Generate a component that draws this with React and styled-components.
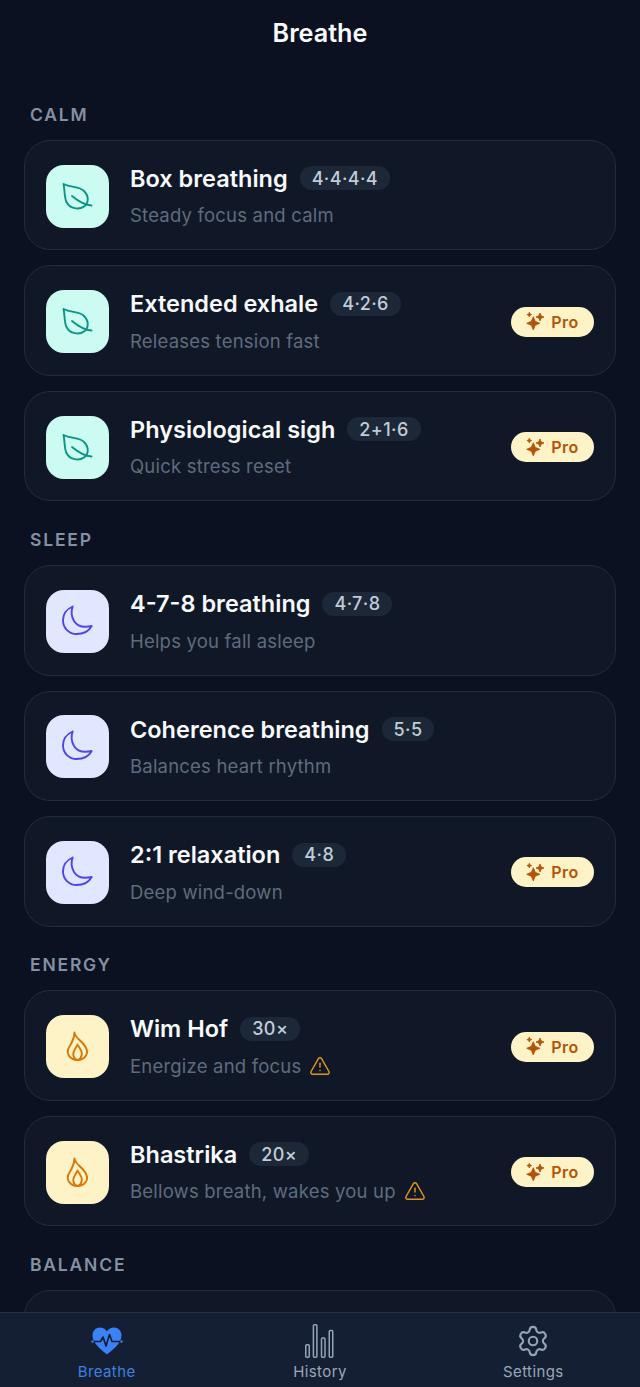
import React from "react";
import styled, { createGlobalStyle } from "styled-components";
import { TriangleAlert, Settings } from "lucide-react";

const Global = createGlobalStyle`
  html, body { margin: 0; padding: 0; background: #0b1120; }
  * { box-sizing: border-box; }
`;
const Page = styled.div`
  width: 640px; height: 1387px; display: flex; flex-direction: column; overflow: hidden;
  background: #0b1120; font-family: Inter, "Liberation Sans", sans-serif; color: #f8fafc;
`;
const Header = styled.h1`
  margin: 0; height: 66px; flex: none; display: flex; align-items: center; justify-content: center;
  font-size: 25.2px; font-weight: 600; color: #f8fafc;
`;
const Scroll = styled.main`
  flex: 1; min-height: 0; overflow: hidden; padding: 36.8px 24px 0;
`;
const Section = styled.section`
  margin-bottom: 26.5px;
  display: flex; flex-direction: column;
`;
const SectionLabel = styled.h2`
  margin: 0 0 13.2px 6px; height: 24px; line-height: 24px; font-size: 17.5px; font-weight: 600;
  letter-spacing: 1.8px; color: #8490a3; text-transform: uppercase;
`;
const Cards = styled.div`
  display: flex; flex-direction: column; gap: 15px;
`;
const Card = styled.div`
  height: 110.5px; flex: none; display: flex; align-items: center; gap: 21px; padding: 2px 21px 0;
  background: #101828; border: 1px solid #222c3c; border-radius: 26px;
`;
const Tile = styled.div`
  width: 63px; height: 63px; flex: none; border-radius: 18px; display: flex; align-items: center; justify-content: center;
  background: ${p => p.$bg}; color: ${p => p.$fg};
`;
const Body = styled.div`
  flex: 1; min-width: 0; display: flex; flex-direction: column; gap: 9.5px;
`;
const TitleRow = styled.div`
  display: flex; align-items: center; gap: 12px; height: 29px;
`;
const Title = styled.span`
  font-size: 23.5px; font-weight: 600; color: #f8fafc; white-space: nowrap;
`;
const Pattern = styled.span`
  height: 24px; padding: 0 12px; border-radius: 12px; background: #1c2838; color: #c2ccd9;
  display: flex; align-items: center; font-size: 18px; font-weight: 500; letter-spacing: 0.4px; white-space: nowrap;
`;
const SubRow = styled.div`
  display: flex; align-items: center; gap: 8px; height: 26px;
`;
const Sub = styled.span`
  font-size: 18.5px; color: #5f6b7d; letter-spacing: 0.2px; white-space: nowrap;
`;
const ProBadge = styled.div`
  height: 30px; width: 83px; flex: none; border-radius: 15px; background: #fef3c7; color: #b45309;
  display: flex; align-items: center; justify-content: center; gap: 6px;
  font-size: 16px; font-weight: 600; letter-spacing: 0.5px;
`;
const TabBar = styled.nav`
  height: 75px; flex: none; display: grid; grid-template-columns: repeat(3, 1fr);
  background: #141f33; border-top: 1px solid #263143;
`;
const Tab = styled.div`
  display: flex; flex-direction: column; align-items: center; padding-top: 11px; gap: 4px;
  color: ${p => (p.$active ? "#3b82f6" : "#94a3b8")};
`;
const TabIcon = styled.div`
  height: 34px; display: flex; align-items: center; justify-content: center;
`;
const TabLabel = styled.span`
  font-size: 15px; font-weight: 400; line-height: 20px; letter-spacing: 0.4px;
  color: ${p => (p.$active ? "#3f7fe0" : "#9aa7b8")};
`;

const TileIcon = ({ children }) => (
  <svg width="63" height="63" viewBox="0 0 63 63" fill="none" stroke="currentColor" strokeWidth="1.9" strokeLinecap="round" strokeLinejoin="round">
    {children}
  </svg>
);
const LeafIcon = () => (
  <TileIcon>
    <path d="M17.500 19C25 23 33 21 38 26 43 31 43 38 38 41.500 33 45 24 44 20.500 37 18 32 19 25 17.500 19Z" />
    <path d="M26 31C32 36 38 40 45.500 40.500" />
  </TileIcon>
);
const MoonIcon = () => (
  <TileIcon>
    <path d="M26.700 16.500C20 19.500 17 25 17 30.500 17 38 23 44 30.500 44 37 44 43 41 45.700 36 37 38 31 36 28 31 25.500 26.500 25 21 26.700 16.500Z" />
  </TileIcon>
);
const FlameIcon = () => (
  <TileIcon>
    <path d="M28.500 17.500C29 22 33 24 37 28.500 40 32 41.500 35 41 38 40.500 42 36.500 45 31.500 45 26 45 22 41.500 21.700 37 21.500 33 24 31 25.500 28 27 25 28.500 21 28.500 17.500Z" />
    <path d="M31.500 29.500C32.500 32 35.500 34.500 35.800 38 36 41.500 34 45 31.500 45 29 45 27 41.500 27.300 38.500 27.500 35 30.500 32.500 31.500 29.500Z" />
  </TileIcon>
);
const star = (cx, cy, r) => {
  const k = r * 0.3;
  return `M${cx} ${cy - r}L${cx + k} ${cy - k}L${cx + r} ${cy}L${cx + k} ${cy + k}L${cx} ${cy + r}L${cx - k} ${cy + k}L${cx - r} ${cy}L${cx - k} ${cy - k}Z`;
};
const Sparkles = () => (
  <svg width="19" height="19" viewBox="0 0 19 19" fill="currentColor" stroke="currentColor" strokeWidth="0.8" strokeLinejoin="round">
    <path d={star(7.3, 11.3, 6.6)} />
    <path d={star(14, 5, 4)} />
    <path d={star(3.3, 2.6, 2.4)} />
  </svg>
);
const HeartPulse = () => (
  <svg width="32" height="32" viewBox="0 0 32 32">
    <path d="M16 29.500C11 25.500 1.500 18.500 1.500 10.500 1.500 5.500 5 2.500 9 2.500c3 0 5.400 1.400 7 3.700 1.600-2.300 4-3.700 7-3.700 4 0 7.500 3 7.500 8 0 8-9.500 15-14.500 19Z" fill="#3b82f6" />
    <path d="M1 16.500H9.500L12 12 15 21 18.500 9.500 21 16.500H31" fill="none" stroke="#111c30" strokeWidth="1.600" strokeLinejoin="round" />
    <circle cx="1.500" cy="16.500" r="1.200" fill="#3b82f6" />
    <circle cx="30.500" cy="16.500" r="1.200" fill="#3b82f6" />
  </svg>
);
const Bars = () => (
  <svg width="29" height="34" viewBox="0 0 29 34" fill="none" stroke="currentColor" strokeWidth="1.500">
    <rect x="0.750" y="20.750" width="3.500" height="12.500" rx="1" />
    <rect x="8.400" y="0.750" width="3.500" height="32.500" rx="1" />
    <rect x="16.500" y="14" width="3.500" height="19.250" rx="1" />
    <rect x="24.250" y="6.500" width="3.500" height="26.750" rx="1" />
  </svg>
);

const calm = { bg: "#ccfbf1", fg: "#0d9488", Icon: LeafIcon };
const sleep = { bg: "#e0e7ff", fg: "#4f46e5", Icon: MoonIcon };
const energy = { bg: "#fef3c7", fg: "#d97706", Icon: FlameIcon };

const sections = [
  { label: "Calm", kind: calm, items: [
    { t: "Box breathing", p: "4·4·4·4", s: "Steady focus and calm" },
    { t: "Extended exhale", p: "4·2·6", s: "Releases tension fast", pro: true },
    { t: "Physiological sigh", p: "2+1·6", s: "Quick stress reset", pro: true },
  ]},
  { label: "Sleep", kind: sleep, items: [
    { t: "4-7-8 breathing", p: "4·7·8", s: "Helps you fall asleep" },
    { t: "Coherence breathing", p: "5·5", s: "Balances heart rhythm" },
    { t: "2:1 relaxation", p: "4·8", s: "Deep wind-down", pro: true },
  ]},
  { label: "Energy", kind: energy, items: [
    { t: "Wim Hof", p: "30×", s: "Energize and focus", pro: true, warn: true },
    { t: "Bhastrika", p: "20×", s: "Bellows breath, wakes you up", pro: true, warn: true },
  ]},
  { label: "Balance", kind: calm, items: [{ t: "", blank: true }] },
];

export default function App() {
  return (
    <Page>
      <Global />
      <Header>Breathe</Header>
      <Scroll>
        {sections.map(sec => (
          <Section key={sec.label}>
            <SectionLabel>{sec.label}</SectionLabel>
            <Cards>
              {sec.items.map((it, i) => {
                const I = sec.kind.Icon;
                return (
                  <Card key={i}>
                    {!it.blank && (
                      <>
                        <Tile $bg={sec.kind.bg} $fg={sec.kind.fg}><I /></Tile>
                        <Body>
                          <TitleRow><Title>{it.t}</Title><Pattern>{it.p}</Pattern></TitleRow>
                          <SubRow>
                            <Sub>{it.s}</Sub>
                            {it.warn && <TriangleAlert size={22} color="#e09320" strokeWidth={1.6} />}
                          </SubRow>
                        </Body>
                        {it.pro && <ProBadge><Sparkles />Pro</ProBadge>}
                      </>
                    )}
                  </Card>
                );
              })}
            </Cards>
          </Section>
        ))}
      </Scroll>
      <TabBar>
        <Tab $active><TabIcon><HeartPulse /></TabIcon><TabLabel $active>Breathe</TabLabel></Tab>
        <Tab><TabIcon><Bars /></TabIcon><TabLabel>History</TabLabel></Tab>
        <Tab><TabIcon><Settings size={34} strokeWidth={1.5} /></TabIcon><TabLabel>Settings</TabLabel></Tab>
      </TabBar>
    </Page>
  );
}
